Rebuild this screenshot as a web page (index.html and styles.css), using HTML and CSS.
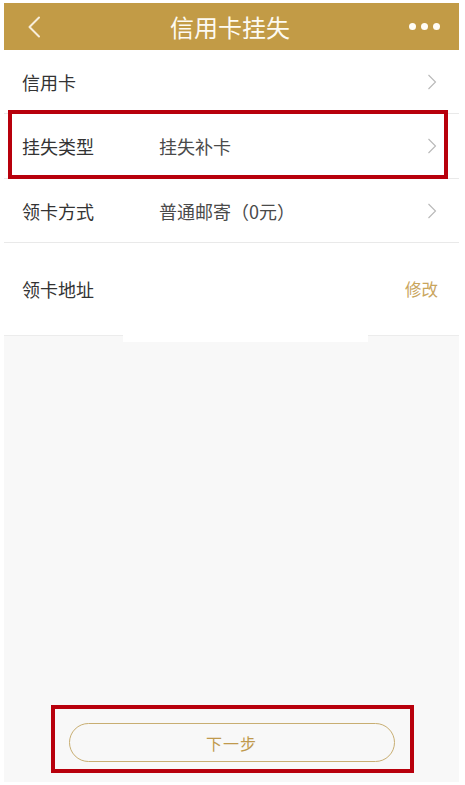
FILE: index.html
```html
<!DOCTYPE html>
<html lang="zh-CN">
<head>
<meta charset="utf-8">
<title>信用卡挂失</title>
<link rel="stylesheet" href="styles.css">
</head>
<body>
<div class="screen">
  <header class="nav">
    <span class="nav-back">
      <svg width="14" height="22" viewBox="0 0 14 22"><path d="M12 1.5 L2.5 11 L12 20.5" fill="none" stroke="#f7eedb" stroke-width="2" stroke-linecap="round" stroke-linejoin="round"/></svg>
    </span>
    <h1 class="nav-title">信用卡挂失</h1>
    <span class="nav-more"><i></i><i></i><i></i></span>
  </header>
  <ul class="list">
    <li class="row r1"><span class="label">信用卡</span><span class="value"></span><span class="chev"><svg width="10" height="16" viewBox="0 0 10 16"><path d="M1.5 1 L8.5 8 L1.5 15" fill="none" stroke="#b8b8b8" stroke-width="1.1"/></svg></span></li>
    <li class="row r2"><span class="label">挂失类型</span><span class="value">挂失补卡</span><span class="chev"><svg width="10" height="16" viewBox="0 0 10 16"><path d="M1.5 1 L8.5 8 L1.5 15" fill="none" stroke="#b8b8b8" stroke-width="1.1"/></svg></span></li>
    <li class="row r3"><span class="label">领卡方式</span><span class="value">普通邮寄（0元）</span><span class="chev"><svg width="10" height="16" viewBox="0 0 10 16"><path d="M1.5 1 L8.5 8 L1.5 15" fill="none" stroke="#b8b8b8" stroke-width="1.1"/></svg></span></li>
    <li class="row r4"><span class="label">领卡地址</span><span class="value"></span><span class="edit">修改</span></li>
  </ul>
  <div class="patch"></div>
  <div class="spacer"></div>
  <div class="actions">
    <button class="btn-next">下一步</button>
  </div>
</div>
<div class="mark mark-type"></div>
<div class="mark mark-btn"></div>
</body>
</html>
```
FILE: styles.css
```css
* { box-sizing: border-box; }
html, body { margin: 0; padding: 0; background: #ffffff; }
body {
  width: 465px;
  height: 785px;
  overflow: hidden;
  font-family: "Noto Sans CJK SC", "Noto Sans", sans-serif;
  padding: 3px 6px 3px 4px;
}
.screen {
  width: 455px;
  height: 779px;
  background: #f8f8f8;
  display: flex;
  flex-direction: column;
}
.nav {
  height: 47px;
  background: #c29b46;
  display: flex;
  align-items: center;
  padding: 0 19px 0 23px;
  flex-shrink: 0;
}
.nav-back { width: 14px; height: 22px; display: flex; margin-top: 1px; }
.nav-title {
  flex: 1;
  margin: 0;
  text-align: center;
  font-weight: 400;
  font-size: 24px;
  color: #fdfaf2;
  line-height: 1;
  padding-left: 10px;
}
.nav-more { display: flex; gap: 5px; }
.nav-more i {
  display: block;
  width: 7px;
  height: 7px;
  border-radius: 50%;
  background: #fffdf6;
}
.list {
  list-style: none;
  margin: 0;
  padding: 0;
  background: #ffffff;
  border-bottom: 1px solid #ececec;
}
.row {
  display: flex;
  align-items: center;
  padding: 0 22px 0 18px;
  border-bottom: 1px solid #e9e9e9;
  font-size: 18px;
  line-height: 1;
}
.row:last-child { border-bottom: none; }
.r1 { height: 64px; }
.r2 { height: 65px; }
.r3 { height: 64px; }
.r4 { height: 92px; }
.label { width: 137px; color: #333333; }
.value { flex: 1; color: #4a4a4a; }
.chev { width: 10px; height: 16px; display: flex; }
.edit { color: #c9a55c; font-size: 16.5px; margin-right: -1px; }
.patch {
  width: 245px;
  height: 7px;
  margin-left: 119px;
  background: #ffffff;
  margin-top: -1px;
}
.spacer { flex: 1; }
.actions {
  display: flex;
  justify-content: center;
  padding-bottom: 20px;
}
.btn-next {
  width: 326px;
  height: 39px;
  border: 1px solid #c8ae72;
  border-radius: 20px;
  background: transparent;
  color: #c09a4d;
  font-family: "Noto Sans CJK SC", "Noto Sans", sans-serif;
  font-size: 16px;
  letter-spacing: 1px;
  padding: 0;
}
.mark {
  position: absolute;
  border: 4px solid #b8000c;
}
.mark-type { left: 8px; top: 110px; width: 440px; height: 69px; }
.mark-btn { left: 51px; top: 705px; width: 363px; height: 68px; }
```
